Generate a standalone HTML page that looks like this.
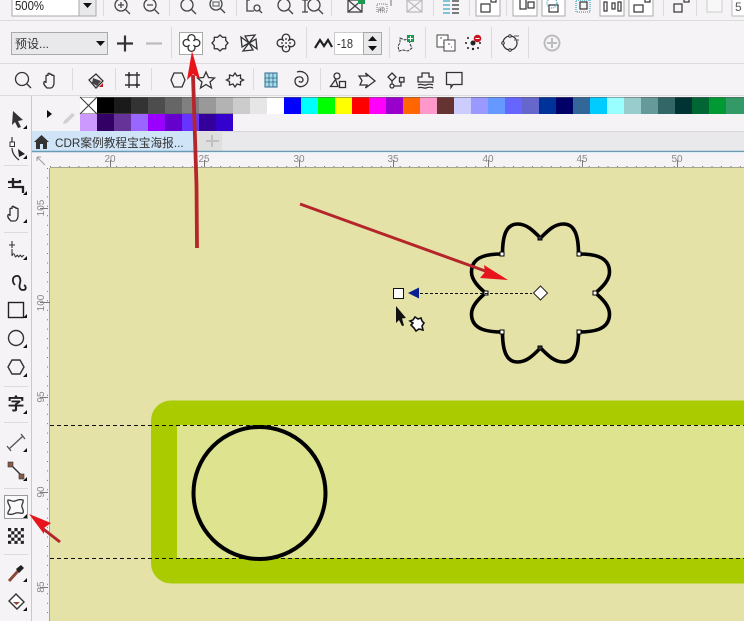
<!DOCTYPE html>
<html><head><meta charset="utf-8"><style>
html,body{margin:0;padding:0;width:744px;height:621px;overflow:hidden;background:#f5f3f6}
svg{display:block;position:absolute;left:0;top:0}
text{font-family:"Liberation Sans","Noto Sans CJK SC",sans-serif}
</style></head><body>
<svg width="744" height="621" viewBox="0 0 744 621" xmlns="http://www.w3.org/2000/svg">
<defs><pattern id="ck" x="8" y="528" width="6.400" height="6.400" patternUnits="userSpaceOnUse"><rect width="6.400" height="6.400" fill="#fff"/><rect width="3.200" height="3.200" fill="#222"/><rect x="3.200" y="3.200" width="3.200" height="3.200" fill="#222"/></pattern></defs>
<rect width="744" height="621" fill="#f5f3f6"/>
<!-- separators -->
<g stroke="#dcdadd" fill="none">
<path d="M0 20.500H744M0 63.500H744M0 95.500H744"/>
<path d="M103.500 0V16M169.500 0V16M236.500 0V16M331.500 0V16M433.500 0V16M469.500 0V16M506.500 0V16M663.500 0V16M696.500 0V16"/>
<path d="M171.500 27V58M306.500 27V58M389.500 27V58M425.500 27V58M491.500 27V58M528.500 27V58"/>
<path d="M72.500 68V90M115.500 68V90M151.500 68V90M253.500 68V90M320.500 68V90"/>
</g>
<!-- ROW 1 -->
<rect x="12" y="-2" width="69" height="18" fill="#fff" stroke="#aaa"/>
<rect x="79" y="-2" width="17" height="18" fill="#e9e8ea" stroke="#aaa"/>
<path d="M83 3h9l-4.500 5z" fill="#111"/>
<text x="15" y="10" font-size="13" fill="#222" textLength="29" lengthAdjust="spacingAndGlyphs">500%</text>
<g fill="none" stroke="#444" stroke-width="1.300">
<circle cx="121" cy="5" r="6"/><path d="M125 9l5 5M118 5h6M121 2v6"/>
<circle cx="150" cy="5" r="6"/><path d="M154 9l5 5M147 5h6"/>
<circle cx="187" cy="5" r="6"/><path d="M191 9l5 5"/>
<circle cx="216" cy="4" r="6"/><path d="M220 8l5 5"/><rect x="213" y="2" width="6" height="4" stroke="#777"/>
<path d="M250 0h-3v11h7"/><circle cx="257" cy="8" r="3"/><path d="M259 10l3 3"/>
<circle cx="284" cy="5" r="6"/><path d="M288 9l5 5"/>
<path d="M305 0v12M302 0h6M302 12h6"/><circle cx="314" cy="5" r="6"/><path d="M318 9l5 5"/>
<rect x="348" y="0" width="14" height="12"/><path d="M348 0l14 12M362 0l-14 12"/>
</g>
<rect x="358" y="-2" width="7" height="6" fill="#1a9a50"/>
<g fill="none" stroke="#777"><rect x="377" y="4" width="10" height="8" stroke-dasharray="1 1"/><path d="M391 0v6"/></g>
<text x="378" y="11" font-size="6" fill="#555">ab</text>
<g fill="none" stroke="#bbb" stroke-width="1.200"><rect x="407" y="0" width="15" height="12"/><path d="M407 0l15 12M422 0l-15 12"/></g>
<path d="M443 1h7M443 5h7M443 9h7M443 13h7" stroke="#3aa7c0" stroke-width="1.300"/>
<path d="M452 1h7M452 5h7M452 9h7M452 13h7" stroke="#333" stroke-width="1.300"/>
<g fill="#fff" stroke="#aaa">
<rect x="476" y="-3" width="24" height="19"/><rect x="513" y="-3" width="24" height="19"/><rect x="542" y="-3" width="23" height="19"/><rect x="600" y="-3" width="24" height="19"/><rect x="629" y="-3" width="24" height="19"/>
</g>
<g fill="none" stroke="#333" stroke-width="1.200">
<rect x="481" y="4" width="9" height="8"/><rect x="491" y="-2" width="5" height="4"/>
<rect x="520" y="-1" width="6" height="10"/><rect x="528" y="2" width="6" height="6"/>
<rect x="549" y="5" width="9" height="7"/><circle cx="552" cy="3" r="5" stroke="#3aa7c0" stroke-dasharray="1 1"/>
<rect x="580" y="2" width="7" height="7"/><rect x="576" y="0" width="14" height="12" stroke="#3aa7c0" stroke-dasharray="1 1"/>
<rect x="604" y="2" width="3" height="9"/><rect x="612" y="3" width="3" height="6"/><rect x="618" y="2" width="3" height="9"/>
<rect x="634" y="5" width="9" height="7"/><rect x="645" y="-2" width="5" height="4"/>
<rect x="674" y="4" width="8" height="8"/><rect x="684" y="-2" width="5" height="4"/>
</g>
<rect x="707" y="-4" width="15" height="16" fill="#f8f8f8" stroke="#ccc"/>
<rect x="732" y="-3" width="20" height="19" fill="#fff" stroke="#bbb"/>
<text x="735" y="11" font-size="12" fill="#555">5</text>
<!-- ROW 2 -->
<rect x="11.500" y="32.500" width="96" height="22" fill="#e9e8ea" stroke="#aaa"/>
<text x="15" y="48" font-size="12" fill="#333">预设...</text>
<path d="M96 41h9l-4.500 5z" fill="#111"/>
<path d="M117 43.500h16M125 35.500v16" stroke="#333" stroke-width="2.200"/>
<path d="M146 43.500h16" stroke="#bbb" stroke-width="2.200"/>
<rect x="179.500" y="32.500" width="23" height="22" fill="#fff" stroke="#aaa"/>
<path d="M189.500 41A3.500 3.500 0 1 1 193.500 41A3.500 3.500 0 1 1 193.500 45A3.500 3.500 0 1 1 189.500 45A3.500 3.500 0 1 1 189.500 41Z" fill="none" stroke="#333" stroke-width="1.300"/>
<path d="M220 35L222.400 37.200L225.700 37.300L225.800 40.600L228 43L225.800 45.400L225.700 48.700L222.400 48.800L220 51L217.600 48.800L214.300 48.700L214.200 45.400L212 43L214.200 40.600L214.300 37.300L217.600 37.200Z" fill="none" stroke="#333" stroke-width="1.300"/>
<g fill="none" stroke="#333" stroke-width="1.300">
<path d="M249 43L245 36L255 35Z"/><path d="M249 43L245 36L255 35Z" transform="rotate(90 249 43)"/><path d="M249 43L245 36L255 35Z" transform="rotate(180 249 43)"/><path d="M249 43L245 36L255 35Z" transform="rotate(270 249 43)"/>
<path d="M283.800 40.800A3.700 3.700 0 1 1 288.200 40.800A3.700 3.700 0 1 1 288.200 45.200A3.700 3.700 0 1 1 283.800 45.200A3.700 3.700 0 1 1 283.800 40.800Z"/>
</g>
<g fill="#555"><circle cx="286" cy="39" r="1"/><circle cx="282" cy="43" r="1"/><circle cx="290" cy="43" r="1"/><circle cx="286" cy="47" r="1"/><circle cx="286" cy="43" r="1"/></g>
<path d="M315 48l5-8 4 6 4-6 4 7" fill="none" stroke="#222" stroke-width="2.200"/>
<rect x="334.500" y="32.500" width="29" height="22" fill="#fff" stroke="#ccc"/>
<text x="337" y="48" font-size="13" fill="#333" textLength="16" lengthAdjust="spacingAndGlyphs">-18</text>
<rect x="363.500" y="32.500" width="18" height="22" fill="#e9e8ea" stroke="#aaa"/>
<path d="M368 41l4.500-5 4.500 5zM368 46l4.500 5 4.500-5z" fill="#111"/>
<path d="M400 38l5 2 4-2 1 6 2 4-4 3-5-1-4 1-1-5 2-3z" fill="none" stroke="#333" stroke-dasharray="3 1"/>
<rect x="407" y="35" width="7" height="7" fill="#1a9a50"/><path d="M410.500 36v5M408 38.500h5" stroke="#fff"/>
<g fill="#fff" stroke="#444"><rect x="437" y="35" width="11" height="12"/><rect x="444" y="40" width="11" height="11"/></g>
<path d="M440 38h2M443 43h1M448 44h2M451 47h1" stroke="#555"/>
<g fill="#222"><circle cx="473" cy="43" r="2.500"/><circle cx="466" cy="43" r="1"/><circle cx="480" cy="43" r="1"/><circle cx="473" cy="49" r="1.200"/><circle cx="468" cy="38" r="1"/><circle cx="468" cy="48" r="1"/><circle cx="478" cy="48" r="1"/></g>
<circle cx="477.500" cy="38.500" r="3.800" fill="#c8141e"/><path d="M475.500 38.500h4" stroke="#fff"/>
<g fill="none" stroke="#333" stroke-width="1.200"><circle cx="510" cy="43" r="7"/><path d="M514 36h5M514 40h5" stroke="#777"/></g>
<g fill="#fff" stroke="#333"><circle cx="510" cy="36" r="1.300"/><circle cx="503" cy="43" r="1.300"/><circle cx="510" cy="50" r="1.300"/></g>
<g fill="none" stroke="#bdbdbd" stroke-width="2"><circle cx="552" cy="43" r="7.500"/><path d="M552 38v10M547 43h10"/></g>
<!-- ROW 3 -->
<g fill="none" stroke="#333" stroke-width="1.300">
<circle cx="22" cy="79" r="6.500"/><path d="M27 84l4 4"/>
<path d="M47 88c-2-2-4-4-3-6 1-1 2 0 2 1v-7c0-1 2-1 2 0v-2c0-1 2-1 2 0v1c0-1 2-1 2 0v1c0-1 2-1 2 0v7c0 3-2 5-3 5z"/>
<path d="M89 80l7-6 7 7-7 7z"/>
<path d="M125 75h15M125 85h15M129 72v16M137 72v16" stroke-width="1.400"/>
<path d="M171 80l3-7h8l3 7-3 7h-8z"/>
<path d="M206 72l2.500 5.500 6 .5-4.500 4 1.500 6-5.500-3.500-5.500 3.500 1.500-6-4.500-4 6-.5z"/>
<path d="M235 73l2 3 3.500-1 0 3.500 3 1.500-3 1.500 0 3.500-3.500-1-2 3-2-3-3.500 1 0-3.500-3-1.500 3-1.500 0-3.500 3.500 1z"/>
<path d="M297 72c6-2 11 2 11 7 0 6-6 9-10 7-4-2-4-8 0-9 3-1 5 1 5 3s-3 3-4 1"/>
<path d="M330.500 86.500l5-7 2.500 7z"/><circle cx="337" cy="76" r="3"/><rect x="339.500" y="81.500" width="6" height="6"/>
<path d="M359 76h8l-1.500-3 9.500 8-9.500 7 1.500-3h-7l2-4.500z"/>
<path d="M392 73l4 4-4 4-4-4z"/><circle cx="392" cy="86" r="2"/><path d="M392 81v3M394 86h7v-4"/><rect x="399.500" y="77.500" width="4.500" height="4.500"/>
<path d="M418 82v-5h4v-4h7v4h4v5zM418 85c3-2 6 1 8 0s5-1 7 0M418 88c3-2 6 1 8 0s5-1 7 0"/>
<path d="M446.500 72.500h15.500v12h-9l-2 3v-3h-4.500z"/>
</g>
<path d="M93 78l8 3-4 5-5-3z" fill="#444"/><path d="M99 87l4-4v4z" fill="#c8141e"/>
<circle cx="129" cy="75" r="1.500" fill="#333"/><circle cx="137" cy="85" r="1.500" fill="#333"/>
<rect x="265" y="73" width="12" height="14" fill="#a9dbe8" stroke="#2a6a8a"/>
<path d="M269 73v14M273 73v14M265 78h12M265 82h12" stroke="#2a6a8a" stroke-width=".8"/>
<!-- palette -->
<g>
<rect x="80" y="97" width="17" height="17" fill="#fff"/><path d="M80 97l17 17M97 97l-17 17" stroke="#333"/>
<rect x="97" y="97" width="17" height="17" fill="#000"/><rect x="114" y="97" width="17" height="17" fill="#1a1a1a"/><rect x="131" y="97" width="17" height="17" fill="#333"/><rect x="148" y="97" width="17" height="17" fill="#4d4d4d"/><rect x="165" y="97" width="17" height="17" fill="#666"/><rect x="182" y="97" width="17" height="17" fill="#808080"/><rect x="199" y="97" width="17" height="17" fill="#999"/><rect x="216" y="97" width="17" height="17" fill="#b3b3b3"/><rect x="233" y="97" width="17" height="17" fill="#ccc"/><rect x="250" y="97" width="17" height="17" fill="#e6e6e6"/><rect x="267" y="97" width="17" height="17" fill="#fff"/><rect x="284" y="97" width="17" height="17" fill="#00f"/><rect x="301" y="97" width="17" height="17" fill="#0ff"/><rect x="318" y="97" width="17" height="17" fill="#0f0"/><rect x="335" y="97" width="17" height="17" fill="#ff0"/><rect x="352" y="97" width="17" height="17" fill="#f00"/><rect x="369" y="97" width="17" height="17" fill="#f0f"/><rect x="386" y="97" width="17" height="17" fill="#90c"/><rect x="403" y="97" width="17" height="17" fill="#f60"/><rect x="420" y="97" width="17" height="17" fill="#f9c"/><rect x="437" y="97" width="17" height="17" fill="#633"/><rect x="454" y="97" width="17" height="17" fill="#ccf"/><rect x="471" y="97" width="17" height="17" fill="#99f"/><rect x="488" y="97" width="17" height="17" fill="#69f"/><rect x="505" y="97" width="17" height="17" fill="#66f"/><rect x="522" y="97" width="17" height="17" fill="#66c"/><rect x="539" y="97" width="17" height="17" fill="#039"/><rect x="556" y="97" width="17" height="17" fill="#006"/><rect x="573" y="97" width="17" height="17" fill="#369"/><rect x="590" y="97" width="17" height="17" fill="#0cf"/><rect x="607" y="97" width="17" height="17" fill="#9ff"/><rect x="624" y="97" width="17" height="17" fill="#9cc"/><rect x="641" y="97" width="17" height="17" fill="#699"/><rect x="658" y="97" width="17" height="17" fill="#366"/><rect x="675" y="97" width="17" height="17" fill="#033"/><rect x="692" y="97" width="17" height="17" fill="#063"/><rect x="709" y="97" width="17" height="17" fill="#093"/><rect x="726" y="97" width="18" height="17" fill="#396"/>
<rect x="80" y="114" width="17" height="17" fill="#c9f"/><rect x="97" y="114" width="17" height="17" fill="#306"/><rect x="114" y="114" width="17" height="17" fill="#639"/><rect x="131" y="114" width="17" height="17" fill="#96f"/><rect x="148" y="114" width="17" height="17" fill="#90f"/><rect x="165" y="114" width="17" height="17" fill="#60c"/><rect x="182" y="114" width="17" height="17" fill="#63f"/><rect x="199" y="114" width="17" height="17" fill="#309"/><rect x="216" y="114" width="17" height="17" fill="#30c"/>
</g>
<path d="M80 97.500H744M80 113.500H233" stroke="#555" stroke-opacity=".5"/>
<path d="M47 110l5 4-5 4z" fill="#111"/>
<path d="M64 121l8-8 3 2-8 8-4 1z" fill="#d0d0d0"/>
<!-- tabs -->
<rect x="32" y="131" width="712" height="20" fill="#e9e8ea"/>
<path d="M32 131.500H744" stroke="#d8d6d9"/>
<rect x="32" y="131" width="162" height="20" fill="#cfe4f7"/>
<rect x="194" y="131" width="28" height="20" fill="#dfdfdf"/>
<path d="M212 135v12M206 141h13" stroke="#c0c0c0" stroke-width="2"/>
<path d="M34 142l7.500-7 7.500 7h-2v7h-4v-5h-3v5h-4v-7z" fill="#333"/>
<text x="55" y="147" font-size="11.700" fill="#333">CDR案例教程宝宝海报...</text>
<path d="M32 151.500H744" stroke="#6b9ab3" stroke-width="1.500"/>
<path d="M194 152.500H744" stroke="#d8eef8"/>
<!-- left toolbar & ruler -->
<path d="M31.500 96V621" stroke="#c9c8cc"/>
<rect x="32" y="153" width="712" height="15" fill="#f5f3f6"/>
<rect x="32" y="153" width="18" height="468" fill="#f5f3f6"/>
<!-- canvas -->
<rect x="50" y="168" width="694" height="453" fill="#e5e2a8"/>
<path d="M49.500 168V621M50 167.500H744" stroke="#a8a78e"/>
<!-- ruler ticks -->
<path d="M50 166.500H744" stroke="#777" stroke-dasharray="1 8.450"/>
<path d="M47.500 168V621" stroke="#777" stroke-dasharray="1 8.450"/>
<path d="M110.500 160v7M204.500 160v7M299.500 160v7M393.500 160v7M488.500 160v7M582.500 160v7M677.500 160v7" stroke="#777"/>
<path d="M40 208.500h8M40 302.500h10M40 397.500h8M40 492.500h8M40 587.500h8" stroke="#777"/>
<g font-size="10" fill="#888" text-anchor="middle">
<text x="110" y="162">20</text><text x="204" y="162">25</text><text x="299" y="162">30</text><text x="393" y="162">35</text><text x="488" y="162">40</text><text x="582" y="162">45</text><text x="677" y="162">50</text>
<text transform="translate(44 208) rotate(-90)">105</text><text transform="translate(44 303) rotate(-90)">100</text><text transform="translate(44 397) rotate(-90)">95</text><text transform="translate(44 492) rotate(-90)">90</text><text transform="translate(44 587) rotate(-90)">85</text>
</g>
<path d="M37 157l8 8M37 157h4M37 157v4" stroke="#999" fill="none"/>
<!-- toolbox -->
<g stroke="#dcdadd"><path d="M4 165.500H28M4 232.500H28M4 386.500H28M4 422.500H28M4 488.500H28M4 554.500H28"/></g>
<path d="M13 111l10 9-5 1 3 6-3 1-3-6-3 3z" fill="#333"/>
<path d="M12 137v5M12 148c0 5 3 9 7 12" fill="none" stroke="#333" stroke-width="1.200"/><rect x="10" y="142" width="4.500" height="4.500" fill="#fff" stroke="#333"/><path d="M18 149l7 5-6 3z" fill="#222"/>
<path d="M13 178v9h10v6M8 182h12v-2" fill="none" stroke="#222" stroke-width="2.300"/><path d="M8 187.500h5" stroke="#222" stroke-width="1"/>
<path d="M11 221c-2-2-4-4-3-6 1-1 2 0 2 1v-7c0-1 2-1 2 0v-2c0-1 2-1 2 0v1c0-1 2-1 2 0v1c0-1 2-1 2 0v7c0 3-2 5-3 5z" fill="none" stroke="#333" stroke-width="1.300"/>
<path d="M12 241v7M9 245h6M12 249v7c1-3 2-3 3 0s2-3 3 0 2-3 3 0 2-2 3 0" fill="none" stroke="#333" stroke-width="1.100"/>
<path d="M15 285c-3-3-3-8 1-9s5 4 4 7-1 7 3 7 3-4 1-5" fill="none" stroke="#222" stroke-width="1.800"/>
<rect x="8.500" y="302.500" width="15" height="15" fill="none" stroke="#222" stroke-width="1.400"/>
<circle cx="16" cy="338" r="7.500" fill="none" stroke="#333" stroke-width="1.400"/>
<path d="M8 367l4-7h8l4 7-4 7h-8z" fill="none" stroke="#333" stroke-width="1.400"/>
<text x="16" y="410" font-size="17" font-weight="bold" fill="#222" text-anchor="middle">字</text>
<path d="M9 449l14-13M7 446l4 5M21 434l4 5" fill="none" stroke="#555" stroke-width="1.300"/>
<path d="M11 465l11 11" stroke="#333" stroke-width="1.400"/>
<rect x="8" y="462" width="5" height="5" fill="#8a5a48" stroke="#333" stroke-width=".6"/><rect x="19" y="474" width="5" height="5" fill="#8a5a48" stroke="#333" stroke-width=".6"/>
<rect x="4.500" y="495.500" width="23" height="23" fill="#f9f8fa" stroke="#999"/>
<path d="M8 500c3 0 4 2 7 1s4-2 8-1c1 3-2 4-1 7s2 4 1 6c-3 1-4-1-7 0s-4 2-8 1c-1-3 3-4 2-7s-3-4-2-7z" fill="none" stroke="#333" stroke-width="1.300"/>
<rect x="8" y="528" width="16" height="16" fill="url(#ck)"/>
<path d="M9 581l9-10" stroke="#8a4a38" stroke-width="3"/><path d="M16 569l5-4 3 3-5 5z" fill="#222"/>
<path d="M9 601l7-7 8 8-7 7z" fill="#fff" stroke="#333" stroke-width="1.400"/><path d="M13 602h7l-3.500 3z" fill="#8a4a38"/>
<path d="M27 125v4h-4zM27 155v4h-4zM27 191v4h-4zM27 219v4h-4zM27 256v4h-4zM27 314v4h-4zM27 344v4h-4zM27 373v4h-4zM27 410v4h-4zM27 448v4h-4zM27 477v4h-4zM27 514v4h-4zM27 578v4h-4zM27 607v4h-4z" fill="#111"/>
<!-- artwork -->
<rect x="151" y="400.500" width="640" height="183" rx="20" fill="#a9cb00"/>
<rect x="177" y="425" width="567" height="133" fill="#dde38f"/>
<path d="M50 425.500H744M50 558.500H744" stroke="#111" stroke-dasharray="4 3"/>
<circle cx="259.500" cy="493" r="66" fill="none" stroke="#000" stroke-width="4"/>
<path transform="translate(540.500 293)" d="M0-55C-8-63-14-69-23-69C-33-69-38-60-38-39C-50-39-69-38-69-21C-69-13-62-6-55 0C-62 6-69 13-69 21C-69 38-50 39-38 39C-38 60-33 69-23 69C-14 69-8 63 0 55C8 63 14 69 23 69C33 69 38 60 38 39C50 39 69 38 69 21C69 13 62 6 55 0C62-6 69-13 69-21C69-38 50-39 38-39C38-60 33-69 23-69C14-69 8-63 0-55Z" fill="none" stroke="#000" stroke-width="3.600"/>
<g fill="#fff" stroke="#000" stroke-width="1"><rect x="538" y="236" width="4" height="4" fill="#333"/><rect x="500" y="252" width="4" height="4"/><rect x="577" y="252" width="4" height="4"/><rect x="484" y="291" width="4" height="4"/><rect x="593" y="291" width="4" height="4"/><rect x="500" y="330" width="4" height="4"/><rect x="577" y="330" width="4" height="4"/><rect x="538" y="346" width="4" height="4" fill="#333"/></g>
<path d="M420 293.500H532" stroke="#111" stroke-dasharray="3 2"/>
<path d="M533.500 293l7-7 7 7-7 7z" fill="#fff" stroke="#222"/>
<rect x="393.500" y="288.500" width="10" height="10" fill="#fff" stroke="#111"/>
<path d="M408 293l11-5.500v11z" fill="#0a1f8f"/>
<path d="M396 306l10 12-4 .5 2 7-2 .5-3-6-3 3z" fill="#111"/>
<path d="M410 321l3-1 2-3 3 2 3-1 1 3 2 2-2 3 1 4-4-1-3 2-2-3-3-3 2-2z" fill="#fff" stroke="#111" stroke-width="1.600"/>
<!-- red arrows -->
<path d="M300 204L488 272" stroke="#b4262a" stroke-width="3" fill="none"/>
<path d="M508 280L484 265 485 272 480 278z" fill="#e8141c"/>
<path d="M197 248L196.500 185L193 75" stroke="#b4262a" stroke-width="3.800" fill="none"/>
<path d="M192 51L200 79 193 74 187 80z" fill="#e8141c"/>
<path d="M60 542L42 528" stroke="#b4262a" stroke-width="3" fill="none"/>
<path d="M29 514L51 523 44 528 44 534z" fill="#e8141c"/>
</svg>
</body></html>
